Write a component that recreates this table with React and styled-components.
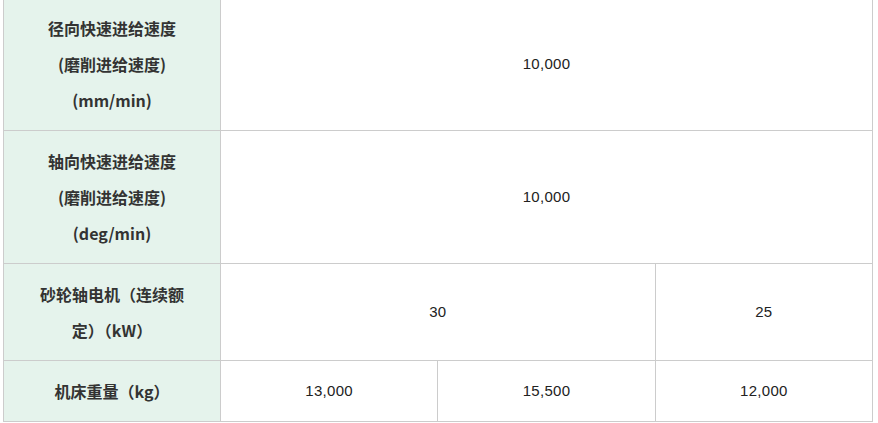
import React from 'react'
import styled, { createGlobalStyle } from 'styled-components'

const GlobalStyle = createGlobalStyle`
  html, body {
    margin: 0;
    padding: 0;
    background: #fff;
  }
`

const rows = [
  {
    label: ['径向快速进给速度', '(磨削进给速度)', '(mm/min)'],
    cells: [{ text: '10,000', span: 3 }],
  },
  {
    label: ['轴向快速进给速度', '(磨削进给速度)', '(deg/min)'],
    cells: [{ text: '10,000', span: 3 }],
  },
  {
    label: ['砂轮轴电机（连续额定）（kW）'],
    cells: [
      { text: '30', span: 2 },
      { text: '25', span: 1 },
    ],
  },
  {
    label: ['机床重量（kg）'],
    cells: [
      { text: '13,000', span: 1 },
      { text: '15,500', span: 1 },
      { text: '12,000', span: 1 },
    ],
  },
]

function App() {
  return (
    <Page>
      <GlobalStyle />
      <SpecTable>
        <colgroup>
          <col style={{ width: 217 }} />
          <col />
          <col />
          <col />
        </colgroup>
        <tbody>
          {rows.map((row, idx) => (
            <tr key={idx}>
              <LabelCell>
                {row.label.map((line, i) => (
                  <div key={i}>{line}</div>
                ))}
              </LabelCell>
              {row.cells.map((cell, i) => (
                <ValueCell key={i} colSpan={cell.span}>
                  {cell.text}
                </ValueCell>
              ))}
            </tr>
          ))}
        </tbody>
      </SpecTable>
    </Page>
  )
}

const Page = styled.div`
  padding: 0 6px 0 3px;
  margin-top: -3px;
`

const SpecTable = styled.table`
  width: 870px;
  border-collapse: collapse;
  table-layout: fixed;
`

const LabelCell = styled.th`
  background: #e5f3ec;
  border: 1px solid #cccccc;
  padding: 12px 30px;
  font-family: 'Noto Sans CJK SC', 'Liberation Sans', sans-serif;
  font-size: 16px;
  font-weight: 700;
  line-height: 36px;
  color: #333333;
  text-align: center;
`

const ValueCell = styled.td`
  border: 1px solid #cccccc;
  padding: 12px 10px;
  font-family: 'Liberation Sans', Arial, sans-serif;
  font-size: 15px;
  letter-spacing: 0.3px;
  line-height: 36px;
  color: #222222;
  text-align: center;
`

export default App
